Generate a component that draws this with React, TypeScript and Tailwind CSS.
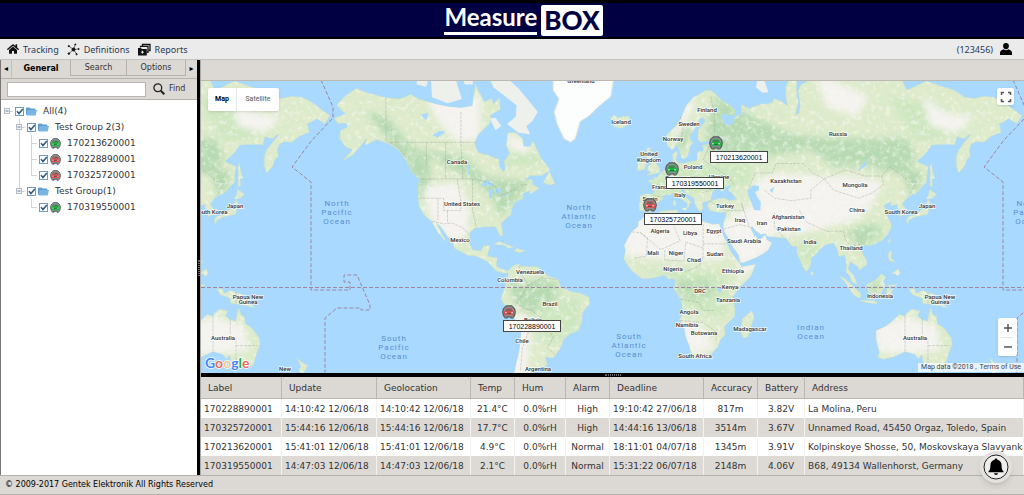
import { useState } from 'react';
import type { ReactNode } from 'react';
import { FaHome } from 'react-icons/fa';

type Point = [number, number];

const WORLD = 692;

/** Web-mercator projection on the 823x292 map canvas. */
function project([lon, lat]: Point) {
  const phi = (lat * Math.PI) / 180;
  const x = 456 + (lon * WORLD) / 360;
  const y = 206.3 - (WORLD / (2 * Math.PI)) * Math.log(Math.tan(Math.PI / 4 + phi / 2));
  return `${x.toFixed(1)} ${y.toFixed(1)}`;
}

function parse(src: string): Point[] {
  return src
    .trim()
    .split(/\s+/)
    .map((p) => p.split(',').map(Number) as Point);
}

const shape = (src: string) => `M${parse(src).map(project).join('L')}Z`;
const line = (src: string) => `M${parse(src).map(project).join('L')}`;

const land = [
  // Europe and Asia
  `-9,37 -9.3,38.7 -8.8,41 -9,43 -5,43.6 -2,43.4 -1.2,44.5 -1.5,46 -2.5,47.3 -4.5,48.3 -3,48.8 -1.5,48.7 -1.6,49.6 0,49.4 1.5,50.5 4,52 5,53.4
   8,53.7 8.3,55 8.1,56.8 10.5,57.7 10.6,56.5 9.7,55.2 11,54.2 14,54 16,54.3 18.5,54.7 20.5,54.8 21,55.5 21,57.2 22.5,57.7 24,57.2 24.3,58.3 23.5,59.2 27,59.5
   29.8,59.8 28,60.5 25,60.2 22.5,60 21.3,61 21.5,63 25,65 24.5,65.8 22,65.6 21,64.2 19,63 17.3,62 17,60.7 18.9,59.9 17,58.7
   16.5,57.5 16,56.2 14.3,55.5 12.8,55.6 12.5,56.5 11.3,58.5 10.6,59.4 8,58.1 5.6,58.8 5,60.5 5,61.8 8,63.2 10,64 13,66 14.6,67.8 16,68.6 19,69.8 22,70.3
   25,71 28,71 31,70.2 33,69.4 38,68.3 41,67.2 40.5,66.3 35,66.6 33,66.5 34.8,64.5 38,64 40,64.7 40,65.5 42.5,66.4 44,66.1 44,68.5 46,68 48,67.7 54,68.5
   57,68.6 60,68.8 61,69.6 65,69 68,68.2 67,70 67,71.5 69,73 72.5,73 72.5,71 73.5,69 72,66.3 74,66.8 74.5,68.5 73.5,71 75,72 78,72.4 82,74 100,76
   113,74 127,73 130,71 134,71.6 140,72.5 150,71.5 155,71 160,69.8 165,69.6 170,70 175,69.8 180,69 186,67.3 190,66.2 187,64.5 183,65.6 180,64.8 178,64.5
   179,62.5 174,61.6 170,60 166,60.2 163.5,59.5 162.5,58 163,56.3 161,55 159.8,53 157,51 155.8,53 155.7,56 156.8,57.8 160,60 163.5,62 162,61.8
   160,60.9 156,61.5 155,59.4 150,59.5 143,59.3 139,56.5 135,54.7 138,53.8 141,53 140.3,50 140.3,48 137.5,46 135,44 132,43.1 130.5,42.5 127.5,39.8
   129.3,37.5 129.3,35.5 126.3,34.5 126.5,37.5 125,38 125,39.5 121.5,39 122,40.7 119.5,39.8 118,39 119,37.5 122.4,37 119.5,35 121.8,31.5
   121.8,29.5 120,26.5 117,23.7 113.5,22.2 110.5,21.3 108,21.5 106,19.5 107.5,16.5 109.2,13 109,11.5 107,10.3 105,8.7 105,10.3 102.5,12 100.8,13.3
   99.3,10 100.3,8.2 102,6.5 103.4,4 103.9,1.4 101.3,3 100.3,6 98.3,8 98.6,12 97.5,16.7 95.3,15.8 94.3,16.3 94,19 91.8,22.5 89,21.8 87,21.3 85,19.6 82.3,16.7
   80.2,15 80,12 79.3,10.2 77.7,8.1 76,10.5 74.5,14 73,17 72.8,21 70.5,20.8 69,22.3 67,24.8 62,25.2 57.5,25.7 56.5,27 54,26.6 51,28.5 50,30.2 48.3,30
   50,27 50.5,25.3 51.3,26 51.8,24.2 54,24.2 56.3,26.3 57,24 59.8,22.4 57.8,19 55,17.2 52,15.6 48,14 45,12.8 43.3,12.8 42.5,16.5 39,21.3 37,25 35,28 34.5,31.3
   35.8,34.5 36,36.5 33,36.1 30.5,36.5 27.5,37 26.2,39 27,40.4 29.5,41.2 32,41.8 35,42 38,41 41.5,41.5 39,44 37,45 39,47 35.2,46.3 35,45.2 33.5,44.5 32.5,46 31,46.6
   28.7,44 28,41.8 28.5,41.1 26,40.8 23.5,40.3 24,38 22.8,36.6 21.2,37.5 19.6,40 19.4,42 16,43.4 14,45 13.5,45.6 12.3,45 13.7,43.5 16,41.8 18.4,40
   17,40.4 16.5,38.5 15.8,38 15.8,40 13.5,41.2 10.5,42.8 9,44.3 6.5,43.2 3.2,43.2 3,41.8 0.5,40.5 -0.3,39.3 0,38.6 -1,37.6 -2.2,36.8 -5.4,36.1 -6.8,37.1`,
  // Africa
  `-6,35.8 -2,35.1 3,36.8 10,37.3 11,36.8 10.2,34.3 15,32.4 19,30.3 20.2,32.3 23,32.6 29,31 32.3,31.3 33.5,28 35.5,24 37.3,20.5 38.5,18 43,12.2 44,10.5
   51.2,11.8 49,6 43,0 39.3,-5 40.6,-11 40.4,-15 35,-20 35.4,-24 32.8,-26.5 32,-29 28,-33 25.5,-34 20,-34.8 18.3,-33.8 17,-29.5
   14.7,-24 14.2,-20 11.8,-16.5 13.7,-12 12.3,-6 9,-1 9.6,3.7 8.5,4.6 6,4.3 3.8,6.4 -2,4.8 -7.7,4.4 -13,8.5 -15,11 -17.3,14.7 -16.3,19 -17,21.2 -13,27.8 -9.8,30
   -9.5,32.3 -6.8,34.2`,
  // North America
  `-168,65.7 -162,66.6 -166.5,68.3 -163,69.8 -156.5,71.3 -150,70.5 -141,69.7 -134,69.5 -128,70.3 -124,69.5 -115,68.5 -108,68 -102,67.8 -96,68.2
   -94.5,72 -90,69 -86,69.5 -85,68.5 -82,69.7 -81.5,67.5 -86.5,66.4 -87,64.5 -93,62 -94.7,60 -94.5,58.7 -92.5,57 -88,56.5 -82.3,55.2 -82,53 -79.8,51.3 -78.8,52.5
   -79.5,54.7 -76.6,57 -78.4,59 -77.5,62.4 -73.5,62.4 -70,61 -69.5,58.9 -66,58.8 -64.5,60.3 -62,57.5 -60,55.3 -56,52.5 -56,51.6 -60,50.2 -66,50.2 -69,48.5
   -65,48.9 -64.8,47 -61.5,45.8 -63.5,44.6 -66,43.6 -66,45 -70,43.7 -70,41.8 -74,40.5 -75.5,38 -76,35.3 -81,31.8 -80.2,26 -81.5,25.8 -82.8,28
   -84,30 -89.5,30 -94.5,29.4 -97.3,27.5 -97.7,22.5 -96,19 -91.5,18.5 -90.3,21 -87,21.3 -88.3,16 -83.3,15 -83.6,10.8 -80,9.2 -77.5,8.4 -77.6,7.4 -80.3,7.4
   -83.5,8.5 -86,11 -88,13.2 -94,16 -98,16.3 -105.5,20 -106,22.8 -109.3,26 -112.8,30.5 -114.8,31.6 -111.5,26 -109.6,23 -112.2,25.5 -115,28.8 -117.2,32.6 -120.6,34.6
   -123.8,39 -124.3,43 -124.3,47.5 -122.7,48.5 -127.5,51.2 -130.3,54.8 -134.5,58 -139.7,59.7 -146,60.7 -149,59.9 -151.8,59.2 -151,61 -154,59.2 -158,56.7
   -163.5,54.8 -158.3,58 -162,58.8 -165,61 -164.5,63 -161,63.7 -161.5,64.6 -166,64.6`,
  // South America
  `-77.5,8.5 -74.9,11 -71.7,12.3 -71.5,10.8 -68,10.8 -62,10.6 -57,6 -51.5,4.2 -50,0 -44,-2.5 -40,-3 -35.3,-5.3 -35,-8.5 -38.8,-13 -39.2,-17.7 -41,-22 -45,-23.3
   -48.5,-26 -50.5,-30.5 -54,-34.5 -58,-34 -57,-37.5 -62,-39 -65,-41.2 -64,-44 -75,-44 -73.5,-38 -71.5,-31 -70.3,-20 -76,-14 -81.2,-6 -80,-2.5 -78.5,2 -77.3,5`,
  // Australia
  `114,-22 114,-26 115.7,-32 115,-34.3 118,-35 123.5,-33.9 129,-31.7 134,-32.7 136,-34.8 137.8,-33 138.3,-35.6 140.5,-38 144.5,-38.2 146.3,-39 150,-37.5 151.5,-33
   153.5,-28.5 153,-25.5 149,-20.5 146,-18.7 145.3,-15 143.5,-14 142.5,-10.8 141.5,-13.5 140.8,-17.5 137,-16 135.5,-14.8 136.8,-12.2 132.5,-11.3 130,-13 129,-15
   126,-14 122.3,-17.5 119,-20`,
  // Great Britain, Ireland, Iceland
  `-5.5,50.1 1.3,51.2 1.6,52.7 0,53.5 -1.6,55.5 -3.3,56 -1.9,57.5 -4,57.6 -3.2,58.6 -5,58.5 -6,56.7 -4.8,54.8 -3,54 -4.5,53.2 -5.2,51.8 -3,51.3`,
  `-10,51.7 -6.3,52.2 -5.7,54.5 -7.5,55.3 -10,54`,
  `-22.6,63.9 -18.5,63.4 -14,64.7 -14.8,66.1 -18,66 -20.5,65.8 -22.5,66.4 -24.2,65.6 -22,65.2`,
  // Japan and Sakhalin
  `130,31.3 131.8,33.5 135.2,34.5 140.8,35.5 142,39.7 141.3,41.4 140,40 139,38 136.7,37 135.8,35.7 131,34.5 129.8,33.2`,
  `140.2,41.6 143.3,42.1 145.3,43.4 141.8,45.4 141.3,43.2`,
  `142,46.1 143.4,46.8 143,49.2 144.5,49.1 143.2,52 142.8,54.3 142,53 142.2,50`,
  // South-east Asia
  `95.3,5.6 98,4.3 103.7,-1 106,-3.2 105.7,-5.8 102.3,-4 98.7,1.5`,
  `109,1.5 111.5,2.6 113.5,3.6 116.8,7 119,5.2 117.7,3 118.8,1 116.2,-3.8 114.5,-4 110.2,-2.9`,
  `105.3,-6.7 108.5,-6.7 112.6,-6.9 114.5,-7.8 114.3,-8.6 108,-7.7`,
  `119.8,0.5 121,1.2 125,1.4 124,0.5 120.5,0.5 121.5,-1 123.4,-0.8 121.8,-2 122.8,-4.5 121.3,-3 120.3,-5.5 119.3,-3.4`,
  `131,-0.8 134,-0.9 135,-3.3 138,-1.6 144.5,-3.9 147.8,-6 147.3,-7 150.7,-10.5 147,-9.6 143.4,-9 138.2,-8.3 138,-5.6 133,-4 132.3,-2.8`,
  `120.3,16 120.8,18.5 122.2,18.3 121.7,15 124,12.9 121,13.7`,
  `122,7 125.5,9.7 126.5,7.5 125.4,5.7 124,7`,
  `120.2,23 121.5,25.3 121,22`,
  `79.8,8 81.8,7.5 80.6,6`,
  `49.3,-12 50.4,-15.6 47.2,-25 44.9,-25.5 43.3,-22 44.4,-16.3`,
  // New Zealand
  `172.8,-34.5 175.5,-36.5 178.4,-37.7 176.8,-40 175.2,-41.6 173.8,-39.3 174.8,-38`,
  `172.7,-40.6 174,-41.5 172,-44 168,-44`,
  // Mediterranean and Caribbean islands
  `8.3,39 9.7,39.2 9.6,41 8.3,41`,
  `12.5,38 15.5,38.2 15,36.8`,
  `-84.8,22 -82,23.1 -77.5,21.5 -74.3,20.2 -77.5,19.9 -79,21.3`,
  `-74.3,18.5 -73,19.9 -68.6,18.7 -71.5,17.8`,
  `-59.3,47.8 -56,51.3 -53,47.3 -55.8,46.9`,
];

const arctic = [
  `-54,74 -54,71 -51,69.5 -53.5,67 -52,64.5 -48.5,61 -45,60 -42.5,61 -40,65 -36,66 -30,68.2 -24,70 -22,74`,
  `-81,74 -88,73.5 -85,71.5 -79,70 -73,68.3 -73.5,66 -78,64.4 -72,62.4 -66,62 -68,64 -65,65 -62,67 -67,69.3 -72,71.3 -78,73`,
  `-117,69.8 -109,68.7 -101.5,69.5 -104,72 -105,74 -118,74`,
  `-125,74 -125,72 -120,71.6 -118,74`,
  `-87,65.6 -84,65.8 -81,64 -84,63`,
  `-95,74 -96,72 -100,72 -102,74`,
  `51.5,71.5 55,70.6 58,70.7 56,72.5 56,74 53,74`,
];

const forest = [
  `25,62 30,70 50,66 70,62 90,61 130,61 135,56 130,50 110,53 92,53 80,58 58,56 38,55 28,56`,
  `128,52 138,52 137,46 131,43`,
  `-78,4 -72,2 -60,5 -52,2 -50,-3 -58,-10 -66,-14 -74,-9`,
  `10,3 28,4 30,-4 18,-6 11,-3`,
  `-152,67 -140,66 -130,60 -118,56 -118,44 -124,42 -130,54 -140,61`,
  `-122,58 -100,56 -90,50 -80,49 -66,48 -70,44 -82,34 -84,40 -94,48 -112,54`,
  `98,28 106,19 110,24 118,26 112,32`,
  `110,1 117,4 115,-3 111,-2`,
  `12,64 18,64 14,57 10,60`,
];

const meadow = [
  `-10,44 10,54 50,54 48,47 20,44 0,42`,
  `-12,10 10,9 34,8 38,-2 36,-16 26,-14 14,-9 9,4`,
  `-62,-8 -40,-4 -40,-20 -52,-28 -62,-26`,
  `-82,53 -58,54 -66,58 -76,57`,
  `72,20 82,26 84,18 78,10`,
  `120,70 150,68 160,62 135,60`,
  `100,26 120,32 116,24 106,17`,
];

const dry = [
  `-18,34 0,34 30,33 36,29 34,14 16,14 -6,15 -18,17`,
  `34,32 50,40 60,34 60,20 50,12 43,11`,
  `42,2 52,12 44,12`,
  `50,48 62,51 85,50 100,50 118,48 112,40 104,33 80,28 62,26 54,36`,
  `113,-20 130,-15 145,-20 148,-31 130,-33 115,-32`,
  `12,-18 24,-20 30,-30 20,-33 14,-27`,
  `-122,46 -104,48 -98,40 -98,28 -106,22 -118,34`,
  `-122,71 -92,70 -92,61 -104,60 -114,65`,
  `-78,62 -66,60 -66,57 -76,58`,
  `-76,-14 -68,-14 -66,-24 -68,-44 -76,-44`,
  `82,74 96,72 110,70 104,66 88,68`,
  `138,70 150,67 164,66 156,62 142,64`,
  `14,69 20,69 12,62 7,60`,
];

const water = [
  `47,45 50,46.8 53,46.5 53,45 51,44.3 52.5,42 54,40.5 53.8,37 50.5,37.3 49,40.5 47.5,43`,
  `-92,46.8 -88,48.7 -84.5,46.6 -88,46.6`,
  `-87.5,42 -87.5,45 -85,45.6 -86.3,42`,
  `-84,45.8 -80.5,45.5 -82,43.3 -83.5,44`,
  `-83,41.7 -79,42.8 -79.3,43.2 -76.3,43.8 -79,42.6`,
  `-117,61.8 -113,62.8 -110,62.6 -114,61.2`,
  `-123,66.5 -119,66.8 -120,65.2`,
  `-98.5,50.5 -97,53.6 -99,53 -97,50.6`,
  `104,51.5 109.5,55.5 108,53`,
  `31.7,-0.2 34,0 33.4,-2.4 31.8,-2.3`,
  `30,60.3 32.5,61 32,60`,
  `58.5,45 61,46.3 60,44`,
];

const borders = [
  `-141,69.7 -141,60.3 -135,59 -130,55.5`,
  `-123,49 -95,49 -89,48 -84,46.5 -82.5,42.5 -75,45 -70,47 -67,47`,
  `-117,32.5 -111,31.3 -106.5,31.7 -101,29.5 -97.3,26`,
  `-139,60 -102,60 -94,60`,
  `-120,60 -120,53`,
  `-110,60 -110,49`,
  `-102,67 -102,60 -101,49`,
  `-124,42 -111,42 -111,37 -102,37 -102,41 -104,49`,
  `-114,42 -114,33`,
  `-109,37 -109,31.5`,
  `-96,49 -96,37 -94,30`,
  `-13,27.7 -8.7,27.3 2,19.2 12,23.5 9,30 8,34`,
  `-8.7,27.3 -5,25 -5.5,16 -12,15`,
  `4,19 4,14 14,13.5 15,23 24,20 24,31.5`,
  `24,20 24,15.5 22,11 15,8`,
  `24,22 37,22`,
  `-67,1 -70,-4 -73,-8 -69,-11 -65,-12 -60,-16 -58,-20 -54,-25 -57,-30 -53,-33`,
  `-69,-17 -67,-23 -70,-30 -71,-40`,
  `-72,11 -70,6 -67,1 -60,5 -52,4`,
  `12,-17 24,-18 30,-22 31,-27`,
  `12,-6 22,-8 24,-12 30,-12`,
  `28,70 30,66 30,62 28,60 24,55 32,52 38,49 40,47`,
  `48,46 51,51 60,51 62,54 76,54 81,51 87,49 98,52 108,50 117,50 121,53 128,50 131,48 135,48 131,43`,
  `87,49 92,45 105,42 112,44 118,47 117,50`,
  `87,49 80,45 80,42 70,41 61,42 56,45`,
  `61,36 61,30 66,25`,
  `44,40 46,35 48,30 43,31 35,29`,
  `27,41 36,37 45,37 44,40`,
  `74,37 78,32 88,28 97,28 98,24 101,21 107,22`,
  `-2,43 3,42.5`,
  `3,51 8,49 7,46 14,46 19,48 24,48 28,45 23,44`,
  `12,66 14,64 12,60`,
  `129,-15 129,-32`,
  `138,-16 138,-26 141,-26 141,-38`,
  `141,-29 152,-29`,
  `141,-2.6 141,-9`,
];

const landPath = land.map(shape).join('');
const arcticPath = arctic.map(shape).join('');
const forestPath = forest.map(shape).join('');
const meadowPath = meadow.map(shape).join('');
const dryPath = dry.map(shape).join('');
const waterPath = water.map(shape).join('');
const borderPath = borders.map(line).join('');

const dateLine =
  'M120 -1L132 26V37L111 59L91 86L110 101V209H149V201H143V194H156L169 224V229H160V227H136L124 237V292';

const countries: [string, number, number][] = [
  ['Canada', 256, 83], ['United States', 261, 125], ['Mexico', 259, 161], ['Japan', 34, 127],
  ['South Korea', 10, 133], ['Greenland', 380, 2], ['Iceland', 420, 43], ['Finland', 506, 31],
  ['Sweden', 488, 45], ['Norway', 472, 60], ['United', 448, 75], ['Kingdom', 448, 81],
  ['Poland', 492, 88], ['Germany', 476, 99], ['Ukraine', 518, 98], ['France', 460, 108],
  ['Italy', 479, 116], ['Spain', 449, 120], ['Turkey', 524, 127], ['Iraq', 539, 141],
  ['Russia', 637, 55], ['Kazakhstan', 585, 102], ['Mongolia', 654, 106], ['China', 656, 131],
  ['Japan', 726, 127], ['South Korea', 700, 133], ['Afghanistan', 587, 138], ['Iran', 561, 144],
  ['Pakistan', 588, 150], ['India', 609, 163], ['Thailand', 650, 169], ['Indonesia', 679, 217],
  ['Papua New', 739, 218], ['Guinea', 739, 223], ['Papua New', 47, 218], ['Guinea', 47, 223],
  ['Australia', 714, 259], ['Australia', 22, 259], ['New', 84, 290], ['Algeria', 459, 152],
  ['Libya', 489, 154], ['Egypt', 513, 152], ['Saudi Arabia', 543, 162], ['Mali', 452, 174],
  ['Niger', 475, 174], ['Chad', 493, 181], ['Sudan', 514, 175], ['Nigeria', 472, 190],
  ['Ethiopia', 532, 192], ['DRC', 499, 212], ['Kenya', 529, 208], ['Tanzania', 527, 221],
  ['Angola', 488, 233], ['Namibia', 486, 246], ['Botswana', 503, 254], ['South Africa', 494, 277],
  ['Madagascar', 549, 250], ['Venezuela', 329, 193], ['Colombia', 309, 201], ['Brazil', 349, 225],
  ['Bolivia', 332, 241], ['Chile', 321, 262], ['Argentina', 337, 290],
];

const oceans: [string[], number, number][] = [
  [['North', 'Pacific', 'Ocean'], 136, 125],
  [['North', 'Pacific', 'Ocean'], 828, 125],
  [['North', 'Atlantic', 'Ocean'], 378, 129],
  [['South', 'Pacific', 'Ocean'], 193, 260],
  [['South', 'Atlantic', 'Ocean'], 428, 258],
  [['Indian', 'Ocean'], 610, 249],
];

type Status = 'ok' | 'alarm';

const markers: { id: string; x: number; y: number; status: Status }[] = [
  { id: '170213620001', x: 515, y: 62, status: 'ok' },
  { id: '170319550001', x: 471, y: 88, status: 'ok' },
  { id: '170325720001', x: 449, y: 124, status: 'alarm' },
  { id: '170228890001', x: 308, y: 231, status: 'alarm' },
];

/** Front view of a car in a grey ring that is open at the bottom; drawn on a 14x14 box. */
function CarShape({ status }: { status: Status }) {
  const fill = status === 'ok' ? '#14b53a' : '#dd4a4c';
  return (
    <>
      <path
        d="M4.400 .8h5.200L12.500 3.700 13.300 7 12.500 10.600 10.800 13H8.900V11.800H5.100V13H3.200L1.500 10.600 .7 7 1.500 3.700z"
        fill="#8c8f90"
        stroke="#5a5d5e"
        strokeWidth="1.200"
        strokeLinejoin="round"
      />
      <path d="M4.600 3.200h4.800q.5 0 .8.700l.8 2 .9.900v3.700h-1.700V9.800H3.800v.7H2.100V6.800l.9-.9.8-2q.3-.7.800-.7z" fill={fill} />
      <path d="M4.800 4.100h4.400l.7 1.700H4.100z" fill="#5c6f66" />
      <path d="M3 7.300h1.700v.9H3zM9.300 7.300H11v.9H9.300z" fill="#e9efe9" />
      <path d="M5.400 8h3.200v.8H5.400z" fill="#3c4a42" />
    </>
  );
}

function WorldMap() {
  return (
    <svg
      viewBox="0 0 823 292"
      preserveAspectRatio="xMidYMid slice"
      className="block h-full w-full bg-[#a9d9ff]"
      role="img"
      aria-label="World map with device positions"
    >
      <defs>
        <clipPath id="land-clip">
          <path d={landPath} />
        </clipPath>
        <filter id="soft" x="-5%" y="-5%" width="110%" height="110%">
          <feGaussianBlur stdDeviation="3" />
        </filter>
        <filter id="relief" x="0" y="0" width="100%" height="100%">
          <feTurbulence type="fractalNoise" baseFrequency="0.14" numOctaves="4" seed="7" />
          <feColorMatrix values="0 0 0 0 0.66  0 0 0 0 0.83  0 0 0 0 0.62  3.2 0 0 0 -1.500" />
        </filter>
        <filter id="ridges" x="0" y="0" width="100%" height="100%">
          <feTurbulence type="fractalNoise" baseFrequency="0.2" numOctaves="3" seed="21" />
          <feColorMatrix values="0 0 0 0 0.96  0 0 0 0 0.96  0 0 0 0 0.92  0 4 0 0 -2.100" />
        </filter>
        <g id="world">
          <path d={landPath} fill="#dfebcb" stroke="#c9dfc4" strokeWidth="0.5" />
          <g clipPath="url(#land-clip)">
            <g filter="url(#soft)">
              <path d={meadowPath} fill="#cee7bf" />
              <path d={forestPath} fill="#b7dab2" />
            </g>
            <rect x="100" width="730" height="292" filter="url(#relief)" opacity="0.6" />
            <path d={dryPath} fill="#f4f3ef" filter="url(#soft)" />
            <rect x="100" width="730" height="292" filter="url(#ridges)" opacity="0.5" />
          </g>
          <path d={arcticPath} fill="#eef0ec" />
          <path d={shape(arctic[0])} fill="#fcfdfd" stroke="#dfe6dc" />
          <path d={waterPath} fill="#a9d9ff" />
          <path d={borderPath} fill="none" stroke="#8f9690" strokeWidth="0.5" strokeOpacity="0.7" strokeDasharray="3 1" />
        </g>
      </defs>

      <use href="#world" />
      <use href="#world" x={-WORLD} />

      <g fill="none" stroke="#a084a0" strokeWidth="1" strokeDasharray="4 2">
        <path d="M0 206.500H823" />
        <path d={dateLine} />
        <path d={dateLine} transform={`translate(${WORLD} 0)`} />
      </g>

      <g className="fill-[#5a8ed0] font-['Roboto',sans-serif] text-[8px] tracking-[1px]" textAnchor="middle">
        {oceans.map(([lines, x, y]) =>
          lines.map((text, i) => (
            <text key={`${text}-${x}-${y}`} x={x} y={y + i * 9}>
              {text}
            </text>
          )),
        )}
      </g>

      <g
        className="fill-[#333] font-['Roboto',sans-serif] text-[6px] font-medium"
        textAnchor="middle"
        stroke="#fff"
        strokeWidth="1.500"
        strokeOpacity="0.8"
        paintOrder="stroke"
      >
        {countries.map(([name, x, y]) => (
          <text key={`${name}-${x}`} x={x} y={y}>
            {name}
          </text>
        ))}
      </g>

      {markers.map((m) => (
        <g key={m.id} transform={`translate(${m.x - 7} ${m.y - 7})`}>
          <CarShape status={m.status} />
          <rect x="1.500" y="15.500" width="57" height="11" fill="#fff" stroke="#444" />
          <text
            x="30"
            y="24"
            textAnchor="middle"
            className="fill-black font-['Liberation_Sans',Arial,sans-serif] text-[7px]"
          >
            {m.id}
          </text>
        </g>
      ))}
    </svg>
  );
}

function MapPanel() {
  return (
    <section className="relative min-h-0 flex-1 overflow-hidden font-['Roboto',sans-serif]">
      <WorldMap />

      <div className="absolute left-[7px] top-[7px] flex h-[23px] rounded-xs bg-white text-[7px] shadow-sm">
        <button type="button" className="w-[29px] border-r border-[#e6e6e6] font-bold text-black">
          Map
        </button>
        <button type="button" className="w-[42px] text-[#565656]">
          Satellite
        </button>
      </div>

      <button
        type="button"
        aria-label="Toggle fullscreen view"
        className="absolute right-[10px] top-[7px] grid size-[17px] place-items-center rounded-xs bg-white shadow-sm"
      >
        <svg viewBox="0 0 12 12" className="size-[12px]" fill="none" stroke="#555" strokeWidth="1.500">
          <path d="M1.500 4V1.500H4M8 1.500h2.500V4M10.500 8v2.500H8M4 10.500H1.500V8" />
        </svg>
      </button>

      <div className="absolute bottom-[17px] right-[7px] flex w-[19px] flex-col rounded-xs bg-white shadow-sm">
        <button type="button" aria-label="Zoom in" className="grid h-[19px] place-items-center">
          <svg viewBox="0 0 8 8" className="size-[8px]" stroke="#555" strokeWidth="1.500">
            <path d="M4 0v8M0 4h8" />
          </svg>
        </button>
        <span className="mx-[3px] h-px bg-[#e6e6e6]" />
        <button type="button" aria-label="Zoom out" className="grid h-[18px] place-items-center">
          <svg viewBox="0 0 8 8" className="size-[8px]" stroke="#555" strokeWidth="1.500">
            <path d="M0 4h8" />
          </svg>
        </button>
      </div>

      <svg viewBox="0 0 46 18" className="absolute bottom-0 left-[3px] h-[18px] w-[46px]" aria-label="Google">
        <text
          x="1"
          y="13"
          stroke="#fff"
          strokeWidth="1.500"
          paintOrder="stroke"
          className="font-['Lato',sans-serif] text-[14px] font-bold"
        >
          <tspan fill="#4285f4">G</tspan>
          <tspan fill="#ea6a5e">o</tspan>
          <tspan fill="#e8c98a">o</tspan>
          <tspan fill="#4285f4">g</tspan>
          <tspan fill="#34a853">l</tspan>
          <tspan fill="#ea6a5e">e</tspan>
        </text>
      </svg>

      <div className="absolute bottom-px right-0 flex h-[9px] items-center gap-[3px] bg-white/70 px-[3px] text-[7px] text-[#444]">
        <span>Map data ©2018 ,</span>
        <a href="#terms">Terms of Use</a>
      </div>
    </section>
  );
}

function DefinitionsIcon() {
  return (
    <svg viewBox="0 0 13 13" className="size-[13px]" fill="#111" stroke="#111">
      <path d="M6.500 6.500L2 3.200M6.500 6.500L8.300 1.500M6.500 6.500L11.500 6M6.500 6.500L9.500 11M6.500 6.500L2 10.500" strokeWidth="0.6" fill="none" />
      <circle cx="6.500" cy="6.500" r="1.500" />
      <circle cx="1.800" cy="3.100" r="0.600" />
      <circle cx="8.300" cy="1.400" r="0.500" />
      <circle cx="11.700" cy="6" r="0.500" />
      <circle cx="9.600" cy="11.200" r="0.600" />
      <circle cx="1.900" cy="10.600" r="0.800" />
    </svg>
  );
}

function ReportsIcon() {
  return (
    <svg viewBox="0 0 13 13" className="size-[13px]">
      <path d="M4.500 3V1.500h7.500v6h-1.500" fill="none" stroke="#111" strokeWidth="1.300" />
      <path d="M2.500 4.500V3.300h7.500v6H9" fill="none" stroke="#111" strokeWidth="1.300" />
      <path d="M0 5h3l.8 1h5v6.500H0z" fill="#111" />
      <path d="M4.400 7.700v3M2.900 9.200h3" stroke="#fff" strokeWidth="0.900" />
    </svg>
  );
}

function NavLink({ icon, label }: { icon: ReactNode; label: string }) {
  return (
    <a href={`#${label.toLowerCase()}`} className="flex items-center gap-[4px]">
      {icon}
      {label}
    </a>
  );
}

function FolderIcon() {
  return (
    <svg viewBox="0 0 11 9" className="h-[9px] w-[11px]">
      <path d="M0 1.500Q0 .5 1 .5h2.500l1 1H8.500q1 0 1 1V8H1Q0 8 0 7z" fill="#5b9fd0" />
      <path d="M1.500 3H11L9.600 8.500H.6z" fill="#79b6e3" />
    </svg>
  );
}

// One 12x16 cell of the tree's guide lines.
const guides: Record<string, string> = {
  ' ': '',
  '|': 'M6.500 0V16',
  '+': 'M6.500 0V16M6.500 8.500H12',
  L: 'M6.500 0V8.500H12',
};

interface TreeNode {
  id: string;
  label: string;
  cells: string;
  // guide lines round the collapse box, for groups only
  box?: string;
  status?: Status;
}

const tree: TreeNode[] = [
  { id: 'all', label: 'All(4)', cells: '', box: 'M9 8.500h3' },
  { id: 'g2', label: 'Test Group 2(3)', cells: ' ', box: 'M9 8.500h3M6.500 0V5M6.500 11V16' },
  { id: 'd1', label: '170213620001', cells: ' |+', status: 'ok' },
  { id: 'd2', label: '170228890001', cells: ' |+', status: 'alarm' },
  { id: 'd3', label: '170325720001', cells: ' |L', status: 'alarm' },
  { id: 'g1', label: 'Test Group(1)', cells: ' ', box: 'M9 8.500h3M6.500 0V5' },
  { id: 'd4', label: '170319550001', cells: '  L', status: 'ok' },
];

function TreeRow({ node }: { node: TreeNode }) {
  const [checked, setChecked] = useState(true);
  return (
    <li className="flex h-[16px] items-center">
      {node.cells.split('').map((c, i) => (
        <svg key={i} viewBox="0 0 12 16" className="h-[16px] w-[12px]" fill="none" stroke="#d2d2d2">
          <path d={guides[c]} />
        </svg>
      ))}
      {node.box && (
        <button type="button" aria-label={`Collapse ${node.label}`} className="h-[16px] w-[12px]">
          <svg viewBox="0 0 12 16" className="h-[16px] w-[12px]" fill="none">
            <path d={node.box} stroke="#d2d2d2" />
            <rect x="3.500" y="5.500" width="5" height="5" fill="#f1f5f8" stroke="#b3bcc4" />
            <path d="M4.500 8h3" stroke="#5f7d96" />
          </svg>
        </button>
      )}
      <label className="ml-[2px] flex items-center">
        <span className="grid size-[9px]">
          <input
            type="checkbox"
            checked={checked}
            onChange={() => setChecked(!checked)}
            className="peer col-start-1 row-start-1 size-[9px] appearance-none border border-[#6f9dc0] bg-white"
          />
          <svg
            viewBox="0 0 9 9"
            className="invisible col-start-1 row-start-1 size-[9px] peer-checked:visible"
            fill="none"
            stroke="#22588a"
            strokeWidth="1.500"
          >
            <path d="M2 4.200l2 2.300L7.800 2" />
          </svg>
        </span>
        <span className="ml-[2px] mr-[6px] grid w-[11px] place-items-center">
          {node.status ? (
            <svg viewBox="0 0 14 14" className="size-[11px]">
              <CarShape status={node.status} />
            </svg>
          ) : (
            <FolderIcon />
          )}
        </span>
        {node.label}
      </label>
    </li>
  );
}

function Sidebar() {
  return (
    <aside className="flex w-[197px] shrink-0 flex-col border-l border-[#777] bg-white">
      <div className="flex h-[19px] items-stretch border-b border-[#b5b1ab] bg-[#dcd8d3] text-[8px]">
        <button type="button" aria-label="Scroll tabs left" className="w-[11px] border-r border-[#c2beb8] text-black">
          ◂
        </button>
        <button type="button" className="w-[58px] font-bold text-black">
          General
        </button>
        <button type="button" className="mb-[2px] w-[56px] border-b border-l border-[#b5b1ab]">
          Search
        </button>
        <button type="button" className="mb-[2px] w-[60px] border-x border-b border-[#b5b1ab]">
          Options
        </button>
        <button type="button" aria-label="Scroll tabs right" className="flex-1 text-black">
          ▸
        </button>
      </div>
      <form
        className="flex h-[21px] items-center border-b border-[#b5b1ab] bg-[#dcd8d3] pl-[6px] text-[8px]"
        onSubmit={(ev) => ev.preventDefault()}
      >
        <input type="text" aria-label="Find device" className="h-[15px] w-[139px] border border-[#b5b5b5] bg-white px-1" />
        <button type="submit" className="ml-[7px] flex items-center gap-[4px]">
          <svg viewBox="0 0 12 12" className="size-[12px]" fill="none" stroke="#222">
            <circle cx="4.800" cy="4.800" r="3.900" strokeWidth="1.300" />
            <path d="M7.800 7.800l3.500 3.500" strokeWidth="2" />
          </svg>
          Find
        </button>
      </form>
      <ul className="pt-[3px] text-[9px]">
        {tree.map((node) => (
          <TreeRow key={node.id} node={node} />
        ))}
      </ul>
    </aside>
  );
}

const columns: { title: string; width?: string; center?: boolean }[] = [
  { title: 'Label', width: 'w-[81px]' },
  { title: 'Update', width: 'w-[95px]' },
  { title: 'Geolocation', width: 'w-[94px]' },
  { title: 'Temp', width: 'w-[44px]', center: true },
  { title: 'Hum', width: 'w-[51px]', center: true },
  { title: 'Alarm', width: 'w-[44px]', center: true },
  { title: 'Deadline', width: 'w-[94px]' },
  { title: 'Accuracy', width: 'w-[54px]', center: true },
  { title: 'Battery', width: 'w-[47px]', center: true },
  { title: 'Address' },
];

const readings = [
  ['170228890001', '14:10:42 12/06/18', '14:10:42 12/06/18', '21.4°C', '0.0%rH', 'High', '19:10:42 27/06/18', '817m', '3.82V', 'La Molina, Peru'],
  ['170325720001', '15:44:16 12/06/18', '15:44:16 12/06/18', '17.7°C', '0.0%rH', 'High', '14:44:16 13/06/18', '3514m', '3.67V', 'Unnamed Road, 45450 Orgaz, Toledo, Spain'],
  ['170213620001', '15:41:01 12/06/18', '15:41:01 12/06/18', '4.9°C', '0.0%rH', 'Normal', '18:11:01 04/07/18', '1345m', '3.91V', 'Kolpinskoye Shosse, 50, Moskovskaya Slavyanka'],
  ['170319550001', '14:47:03 12/06/18', '14:47:03 12/06/18', '2.1°C', '0.0%rH', 'Normal', '15:31:22 06/07/18', '2148m', '4.06V', 'B68, 49134 Wallenhorst, Germany'],
];

function ReadingsTable() {
  return (
    <div className="overflow-hidden bg-white">
      <table className="w-full table-fixed border-separate border-spacing-0 whitespace-nowrap text-[9px]">
        <colgroup>
          {columns.map((c) => (
            <col key={c.title} className={c.width} />
          ))}
        </colgroup>
        <thead>
          <tr className="h-[22px] bg-[#dcd8d3]">
            {columns.map((c) => (
              <th key={c.title} className="border-b border-r border-[#b9b5af] pl-[7px] pt-[2px] text-left font-normal">
                {c.title}
              </th>
            ))}
          </tr>
        </thead>
        <tbody>
          {readings.map((row) => (
            <tr key={row[0]} className="h-[19px] even:bg-[#dddad6]">
              {row.map((cell, i) => (
                <td
                  key={columns[i].title}
                  className={`overflow-hidden border-r border-[#f3f2f0] pt-px ${columns[i].center ? 'text-center' : 'pl-[3px]'}`}
                >
                  {cell}
                </td>
              ))}
            </tr>
          ))}
        </tbody>
      </table>
    </div>
  );
}

export default function App() {
  return (
    <div className="flex h-screen flex-col overflow-hidden bg-[#dcd8d3] font-['DejaVu_Sans',Verdana,sans-serif] text-[9px] leading-none text-[#333]">
      <header className="flex h-[39px] shrink-0 items-center justify-center gap-[4px] border-t-3 border-b-2 border-black bg-[#000042] pl-[23px] font-['Lato',sans-serif]">
        <span className="flex h-[30px] items-end border-b-3 border-white pb-[3px] text-[24px] font-bold leading-[24px] text-white">
          Measure
        </span>
        <span className="flex h-[31px] items-center rounded-xs bg-white px-[3px] text-[26px] font-black text-[#000042]">
          BOX
        </span>
      </header>

      <nav className="flex h-[21px] shrink-0 items-center gap-[8px] border-b border-[#c4c4c4] bg-[#ebebeb] pl-[7px] pr-[12px] font-['Noto_Sans',sans-serif] text-[#1f3a56]">
        <NavLink icon={<FaHome className="size-[12px] text-[#111]" />} label="Tracking" />
        <NavLink icon={<DefinitionsIcon />} label="Definitions" />
        <NavLink icon={<ReportsIcon />} label="Reports" />
        <a href="#account" className="ml-auto flex items-center gap-[7px]">
          (123456)
          <svg viewBox="0 0 12 12" className="size-[12px]" fill="#000">
            <path d="M6 0a2.900 3 0 0 1 2.900 3C8.900 4.700 7.800 6.300 6 6.300S3.100 4.700 3.100 3A2.900 3 0 0 1 6 0zM0 12V10C0 7.500 2 7 3.800 6.300Q6 8 8.200 6.300C10 7 12 7.500 12 10v2z" />
          </svg>
        </a>
      </nav>

      <div className="flex min-h-0 flex-1">
        <Sidebar />
        <div className="grid w-[3px] shrink-0 place-items-center bg-black">
          <span className="h-[16px] w-[2px] border-x border-dotted border-[#666]" />
        </div>
        <main className="flex min-w-0 flex-1 flex-col border-l border-[#aaa]">
          <div className="h-[21px] shrink-0 border-b border-[#bcb8b2] bg-[#dcd8d3]" />
          <MapPanel />
          <div className="grid h-[4px] shrink-0 place-items-center bg-black">
            <span className="h-[2px] w-[16px] border-y border-dotted border-[#666]" />
          </div>
          <ReadingsTable />
        </main>
      </div>

      <footer className="flex h-[20px] shrink-0 items-center border-y border-[#b5b1ab] bg-[#dcd8d3] pl-[5px] text-[8px] text-black">
        © 2009-2017 Gentek Elektronik All Rights Reserved
      </footer>

      <button
        type="button"
        aria-label="Notifications"
        className="fixed bottom-[12px] right-[12px] grid size-[32px] place-items-center rounded-full bg-[#e3e1de] shadow-md"
      >
        <svg viewBox="0 0 26 26" className="size-[26px]">
          <circle cx="13" cy="13" r="12" fill="#f0eeec" stroke="#222" />
          <path d="M13 4.500c.8 0 1.300.5 1.400 1.200 2.700.6 4.200 2.700 4.200 5.500 0 3.500.6 5 2 6.300v.8H5.400v-.8c1.400-1.300 2-2.800 2-6.300 0-2.800 1.500-4.900 4.200-5.500.1-.7.600-1.200 1.400-1.200zM11 19.300h4c-.2 1-1 1.600-2 1.600s-1.800-.6-2-1.600z" fill="#000" />
        </svg>
      </button>
    </div>
  );
}
